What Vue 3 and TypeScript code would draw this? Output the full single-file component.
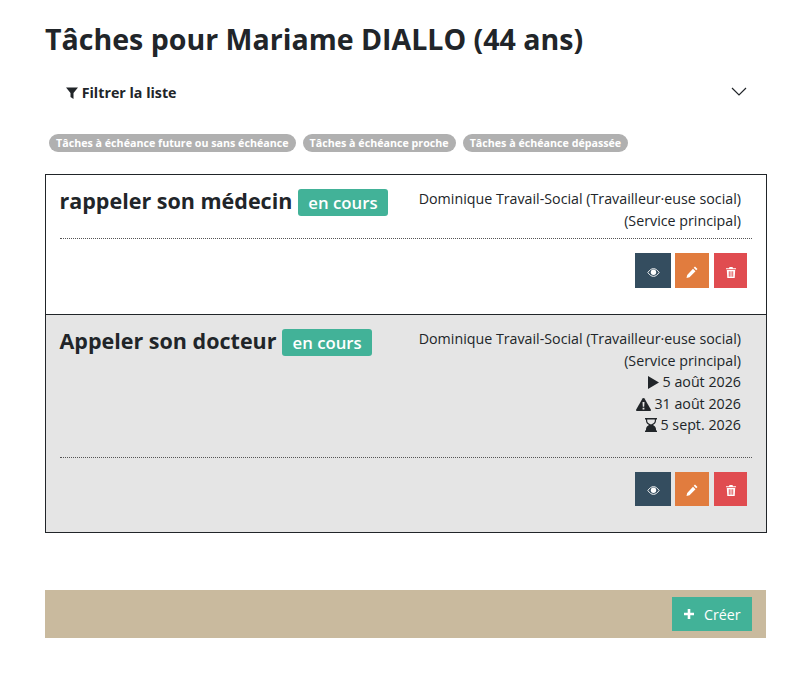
<script setup lang="ts">
interface Task {
  title: string
  dates: boolean
  alt: boolean
}
const tasks: Task[] = [
  { title: 'rappeler son médecin', dates: false, alt: false },
  { title: 'Appeler son docteur', dates: true, alt: true }
]
const legend = [
  'Tâches à échéance future ou sans échéance',
  'Tâches à échéance proche',
  'Tâches à échéance dépassée'
]
</script>

<template>
  <div class="page">
    <h1 class="title">Tâches pour Mariame DIALLO (44 ans)</h1>
    <div class="filter">
      <span class="filter-label">
        <svg class="funnel" viewBox="0 0 12 12" width="12" height="12"><path d="M0 .5h12L7.500 6v6L4.500 10V6z" fill="#212529" /></svg>
        Filtrer la liste
      </span>
      <svg class="chevron" viewBox="0 0 16 10" width="16" height="10"><path d="M1 1l7 7 7-7" fill="none" stroke="#212529" stroke-width="1.2" /></svg>
    </div>
    <div class="legend">
      <span v-for="l in legend" :key="l" class="pill">{{ l }}</span>
    </div>
    <ul class="tasks">
      <li v-for="t in tasks" :key="t.title" class="task" :class="{ alt: t.alt }">
        <div class="head">
          <div class="name">
            <h2>{{ t.title }}</h2>
            <span class="status">en cours</span>
          </div>
          <div class="meta">
            <div>Dominique Travail-Social (Travailleur·euse social)</div>
            <div>(Service principal)</div>
            <template v-if="t.dates">
              <div><svg viewBox="0 0 11 13" width="11" height="13"><path d="M0 0l11 6.500L0 13z" fill="#212529" /></svg> 5 août 2026</div>
              <div><svg viewBox="0 0 15 13" width="15" height="13"><path d="M7.500 0c.5 0 .8.300 1 .6l6.300 10.800c.4.700 0 1.600-.9 1.600H1.100c-.9 0-1.300-.9-.9-1.600L6.500.6c.2-.3.500-.6 1-.6z" fill="#212529" /><path d="M6.500 4h2l-.3 4.800H6.800zM6.600 9.700h1.800v1.800H6.600z" fill="#e5e5e5" /></svg> 31 août 2026</div>
              <div><svg viewBox="0 0 12 14" width="12" height="14"><path d="M0 0h12v1.500h-1V3c0 2-1.600 3.200-3 4 1.400.8 3 2 3 4v1.500h1V14H0v-1.500h1V11c0-2 1.600-3.200 3-4-1.400-.8-3-2-3-4V1.500H0zM2.200 1.500V3c0 1.500 1.500 2.600 3.800 3.400C8.300 5.600 9.800 4.500 9.800 3V1.500z" fill="#212529" fill-rule="evenodd" /></svg> 5 sept. 2026</div>
            </template>
          </div>
        </div>
        <div class="actions">
          <button class="btn dark">
            <svg viewBox="0 0 14 10" width="13" height="9"><path d="M.7 5C2.600 2.200 4.700.7 7 .7s4.400 1.500 6.300 4.300C11.400 7.800 9.300 9.300 7 9.300S2.600 7.800.7 5z" fill="none" stroke="#fff" stroke-width="1" /><circle cx="7" cy="4.800" r="3" fill="#fff" /></svg>
          </button>
          <button class="btn orange">
            <svg viewBox="0 0 12 12" width="12" height="12"><path d="M9 .5l2.500 2.500-1.300 1.300-2.500-2.500zM7 2.800l2.500 2.500-6 6-3 .7.700-3z" fill="#fff" /></svg>
          </button>
          <button class="btn red">
            <svg viewBox="0 0 10 11" width="10" height="11"><path d="M3.500 0h3l.5 1.200h3V2.300H0V1.200h3zM.8 3h8.400l-.5 8H1.300zM2.800 4.200v5.600h.9V4.200zM4.550 4.200v5.600h.9V4.200zM6.300 4.200v5.600h.9V4.200z" fill="#fff" fill-rule="evenodd" /></svg>
          </button>
        </div>
      </li>
    </ul>
    <div class="footer">
      <button class="create">
        <svg viewBox="0 0 10 10" width="10" height="10"><path d="M3.700 0h2.600v3.700H10v2.600H6.300V10H3.700V6.300H0V3.700h3.700z" fill="#fff" /></svg>
        <span>Créer</span>
      </button>
    </div>
  </div>
</template>

<style>
body { margin: 0; background: #fff; }
</style>

<style scoped>
.page {
  width: 721px;
  margin-left: 45px;
  padding-top: 20px;
  font-family: "Open Sans", sans-serif;
  color: #212529;
}
.title {
  margin: 0;
  font-size: 28.550px;
  line-height: 38px;
  font-weight: 700;
}
.filter {
  display: flex;
  justify-content: space-between;
  align-items: center;
  height: 24px;
  margin-top: 22px;
  padding: 0 19px 0 21px;
}
.filter-label { font-size: 14.250px; font-weight: 700; }
.funnel { vertical-align: -1px; }
.legend {
  display: flex;
  gap: 7px;
  margin-top: 30px;
  padding-left: 4px;
}
.pill {
  background: #b0b0b0;
  color: #fff;
  font-size: 10.690px;
  font-weight: 700;
  line-height: 18px;
  padding: 0 7px;
  border-radius: 9px;
}
.tasks {
  list-style: none;
  margin: 22px -1px 0 0;
  padding: 0;
  border: 1px solid #212529;
}
.task { padding: 14px 14px 26px 14px; height: 139px; box-sizing: border-box; }
.task.alt {
  background: #e5e5e5;
  border-top: 1px solid #212529;
  height: 218px;
}
.head {
  display: flex;
  justify-content: space-between;
  padding-right: 11px;
  padding-bottom: 7px;
  border-bottom: 1px dotted #555;
}
.alt .head { padding-bottom: 21px; }
.name { display: flex; align-items: flex-start; gap: 6px; }
h2 { margin: -1px 0 0 -0.500px; font-size: 21.500px; line-height: 25px; font-weight: 700; }
.status {
  background: #42b298;
  color: #fff;
  font-size: 16.750px;
  font-weight: 600;
  line-height: 27px;
  padding: 0 10px;
  border-radius: 3px;
}
.meta { text-align: right; font-size: 14.250px; line-height: 21.500px; margin-top: -1px; }
.meta svg { vertical-align: -2px; }
.actions { display: flex; justify-content: flex-end; gap: 4px; margin-top: 14px; padding-right: 5px; }
.btn {
  width: 36px;
  height: 35px;
  border: 0;
  padding: 3px 0 0;
  display: flex;
  align-items: center;
  justify-content: center;
}
.alt .btn { height: 34px; }
.dark { background: #344d5f; }
.orange { background: #e17c3e; width: 34px; }
.red { background: #e04c50; width: 33px; margin-left: 1px; }
.footer {
  display: flex;
  justify-content: flex-end;
  background: #c9ba9e;
  margin-top: 57px;
  height: 48px;
  padding: 7px 14px 0 0;
  box-sizing: border-box;
}
.create {
  display: flex;
  align-items: center;
  gap: 10px;
  width: 80px;
  height: 34px;
  padding: 0 0 0 12px;
  border: 0;
  background: #42b298;
  color: #fff;
  font-family: inherit;
  font-size: 14.250px;
}
</style>
